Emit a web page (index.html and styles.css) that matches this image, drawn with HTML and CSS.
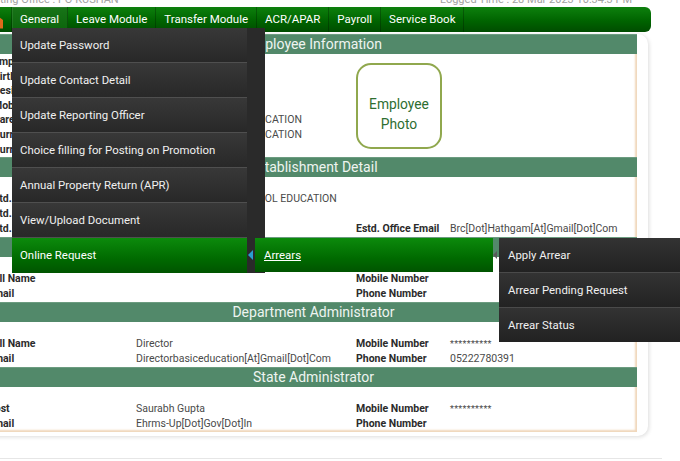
FILE: index.html
```html
<!DOCTYPE html>
<html>
<head>
<meta charset="utf-8">
<link rel="stylesheet" href="styles.css">
</head>
<body>
<div class="top">
  <span class="office">ting Office : PO KUSHAN</span>
  <span class="logged">Logged Time : 28 Mar 2023 10:34:3 PM</span>
</div>
<nav class="nav">
  <span class="home"><svg width="16" height="25" viewBox="0 0 16 25"><path d="M8 14 L12 10 L16 13 L16 22 L8 22 Z" fill="#e06a1c"/></svg></span>
  <span class="nav-item active">General</span>
  <span class="nav-item">Leave Module</span>
  <span class="nav-item">Transfer Module</span>
  <span class="nav-item">ACR/APAR</span>
  <span class="nav-item">Payroll</span>
  <span class="nav-item">Service Book</span>
</nav>
<div class="panel">
  <div class="card">
    <div class="band">Employee Information</div>
    <div class="info">
      <div class="info-rows">
        <span class="lbl">Employee Name</span><span class="val"></span>
        <span class="lbl">Birth Date</span><span class="val"></span>
        <span class="lbl">Designation</span><span class="val"></span>
        <span class="lbl">Mobile Number</span><span class="val"></span>
        <span class="lbl">Parent Department</span><span class="val">DEPARTMENT F BASIC EDUCATION</span>
        <span class="lbl">Current Department</span><span class="val">DEPARTMENT F BASIC EDUCATION</span>
        <span class="lbl">Current Office</span><span class="val"></span>
      </div>
      <div class="photo">Employee<br>Photo</div>
    </div>
    <div class="band">Establishment Detail</div>
    <div class="grid">
      <span class="spacer"></span>
      <span class="lbl">Estd. Name</span><span class="val">DEPARTMENT BASIC SCHOOL EDUCATION</span><span class="lbl"></span><span class="val"></span>
      <span class="lbl">Estd. Code</span><span class="val"></span><span class="lbl"></span><span class="val"></span>
      <span class="lbl">Estd. Address</span><span class="val"></span><span class="lbl">Estd. Office Email</span><span class="val">Brc[Dot]Hathgam[At]Gmail[Dot]Com</span>
    </div>
    <div class="band">Establishment Administrator</div>
    <div class="grid">
      <span class="spacer"></span>
      <span class="lbl">Full Name</span><span class="val"></span><span class="lbl">Mobile Number</span><span class="val"></span>
      <span class="lbl">Email</span><span class="val"></span><span class="lbl">Phone Number</span><span class="val"></span>
    </div>
    <div class="band">Department Administrator</div>
    <div class="grid">
      <span class="spacer"></span>
      <span class="lbl">Full Name</span><span class="val">Director</span><span class="lbl">Mobile Number</span><span class="val stars">**********</span>
      <span class="lbl">Email</span><span class="val">Directorbasiceducation[At]Gmail[Dot]Com</span><span class="lbl">Phone Number</span><span class="val">05222780391</span>
    </div>
    <div class="band">State Administrator</div>
    <div class="grid">
      <span class="spacer"></span>
      <span class="lbl">Post</span><span class="val">Saurabh Gupta</span><span class="lbl">Mobile Number</span><span class="val stars">**********</span>
      <span class="lbl">Email</span><span class="val">Ehrms-Up[Dot]Gov[Dot]In</span><span class="lbl">Phone Number</span><span class="val"></span>
    </div>
  </div>
</div>
<div class="footline"></div>

<ul class="menu">
  <li class="mi">Update Password</li>
  <li class="mi">Update Contact Detail</li>
  <li class="mi">Update Reporting Officer</li>
  <li class="mi">Choice filling for Posting on Promotion</li>
  <li class="mi">Annual Property Return (APR)</li>
  <li class="mi">View/Upload Document</li>
  <li class="mi on">Online Request</li>
</ul>
<span class="arrow-blue"></span>
<div class="submenu"><span class="u">Arrears</span></div>
<span class="arrow-gray"></span>
<ul class="subsub">
  <li class="si">Apply Arrear</li>
  <li class="si">Arrear Pending Request</li>
  <li class="si">Arrear Status</li>
</ul>
</body>
</html>
```

FILE: styles.css
```css
html, body {
  margin: 0;
  padding: 0;
}
body {
  width: 680px;
  height: 461px;
  overflow: hidden;
  position: relative;
  background: #ffffff;
  font-family: Roboto, "Liberation Sans", sans-serif;
}
.top {
  height: 7px;
  overflow: hidden;
  display: flex;
  font-size: 11px;
  line-height: 13px;
  color: #a3a3a3;
}
.top span {
  margin-top: -7px;
  white-space: nowrap;
}
.office { width: 440px; }
.nav {
  margin-left: -12px;
  width: 663px;
  height: 25px;
  display: flex;
  align-items: stretch;
  background: linear-gradient(#0d800d, #006400 55%, #004c00);
  border-radius: 0 6px 6px 0;
  box-sizing: border-box;
}
.home {
  width: 24px;
  flex: none;
  display: flex;
  justify-content: flex-end;
  border-right: 1px solid rgba(0,0,0,0.25);
  box-sizing: border-box;
}
.home svg { margin-right: 8px; }
.nav-item {
  color: #ffffff;
  font-size: 11.5px;
  line-height: 25px;
  padding: 0 8px;
  border-right: 1px solid rgba(0,0,0,0.25);
  white-space: nowrap;
}
.nav-item.active {
  background: linear-gradient(#187418, #0b640b);
  box-shadow: inset 1px 1px 0 rgba(255,255,255,0.08);
}
.panel {
  margin-left: -12px;
  margin-top: 2px;
  width: 660px;
  padding: 0 11px 4px 0;
  box-sizing: border-box;
  border-radius: 0 10px 10px 0;
  box-shadow: 1px 1px 4px rgba(0,0,0,0.14);
  background: #ffffff;
}
.card {
  background: #ffffff;
  box-shadow: inset -2px -2px 2px #f0d7bb;
  padding-bottom: 0;
}
.band {
  height: 20px;
  line-height: 19px;
  background: #52896a;
  color: #eef4f0;
  font-size: 14px;
  text-align: center;
  padding-left: 2px;
  border-top: 1px solid #6c9c80;
  box-sizing: border-box;
}
.info {
  display: flex;
  align-items: flex-start;
}
.info-rows {
  display: grid;
  grid-template-columns: 143px 220px;
  padding-left: 5px;
  padding-top: 1px;
  grid-auto-rows: 14.6px;
}
.grid {
  display: grid;
  grid-template-columns: 148px 220px 94px 1fr;
  grid-auto-rows: 15px;
}
.spacer { grid-column: 1 / -1; }
.lbl, .val {
  font-size: 10.5px;
  line-height: 14px;
  white-space: nowrap;
  overflow: visible;
}
.lbl {
  font-weight: 700;
  color: #2b2b2b;
}
.val { color: #4a4a4a; }
.stars { font-size: 9px; letter-spacing: 0.3px; }
.photo {
  margin-top: 9px;
  width: 86px;
  height: 86px;
  box-sizing: border-box;
  padding-top: 15px;
  border: 2px solid #90a84e;
  border-radius: 15px;
  color: #2e6e31;
  font-size: 13.8px;
  line-height: 20px;
  display: flex;
  align-items: center;
  justify-content: center;
  text-align: center;
}
.footline {
  margin-top: 22px;
  width: 662px;
  height: 1px;
  background: #e6e6e6;
}
.menu {
  position: absolute;
  left: 12px;
  top: 28px;
  width: 253px;
  margin: 0;
  padding: 0 18px 0 0;
  box-sizing: border-box;
  list-style: none;
  background: #2a2a2a;
}
.mi {
  height: 35px;
  line-height: 34px;
  padding-left: 8px;
  color: #f0f0f0;
  font-size: 11.4px;
  background: linear-gradient(#383838, #282828);
  border-bottom: 1px solid #4f4f4f;
  box-sizing: border-box;
  white-space: nowrap;
}
.mi.on {
  background: linear-gradient(#0c8a0c, #006a00 60%, #005400);
  border-bottom: none;
  color: #ffffff;
}
.arrow-blue {
  position: absolute;
  left: 248px;
  top: 250px;
  width: 0;
  height: 0;
  border-top: 5px solid transparent;
  border-bottom: 5px solid transparent;
  border-right: 5px solid #2a9fd0;
}
.submenu {
  position: absolute;
  left: 255px;
  top: 238px;
  width: 238px;
  height: 34px;
  box-sizing: border-box;
  padding-left: 9px;
  background: linear-gradient(#0c8a0c, #006a00 60%, #005400);
  color: #ffffff;
  font-size: 11.4px;
  line-height: 34px;
}
.u { text-decoration: underline; }
.arrow-gray {
  position: absolute;
  left: 493px;
  top: 251px;
  width: 0;
  height: 0;
  border-top: 4px solid transparent;
  border-bottom: 4px solid transparent;
  border-right: 4px solid #5a5a5a;
}
.subsub {
  position: absolute;
  left: 499px;
  top: 238px;
  width: 190px;
  margin: 0;
  padding: 0;
  list-style: none;
  background: #262626;
}
.si {
  height: 35px;
  line-height: 34px;
  padding-left: 9px;
  color: #f0f0f0;
  font-size: 11.4px;
  background: linear-gradient(#333333, #222222);
  border-bottom: 1px solid #4a4a4a;
  box-sizing: border-box;
  white-space: nowrap;
}
.si:last-child { border-bottom: none; height: 34px; }
```
